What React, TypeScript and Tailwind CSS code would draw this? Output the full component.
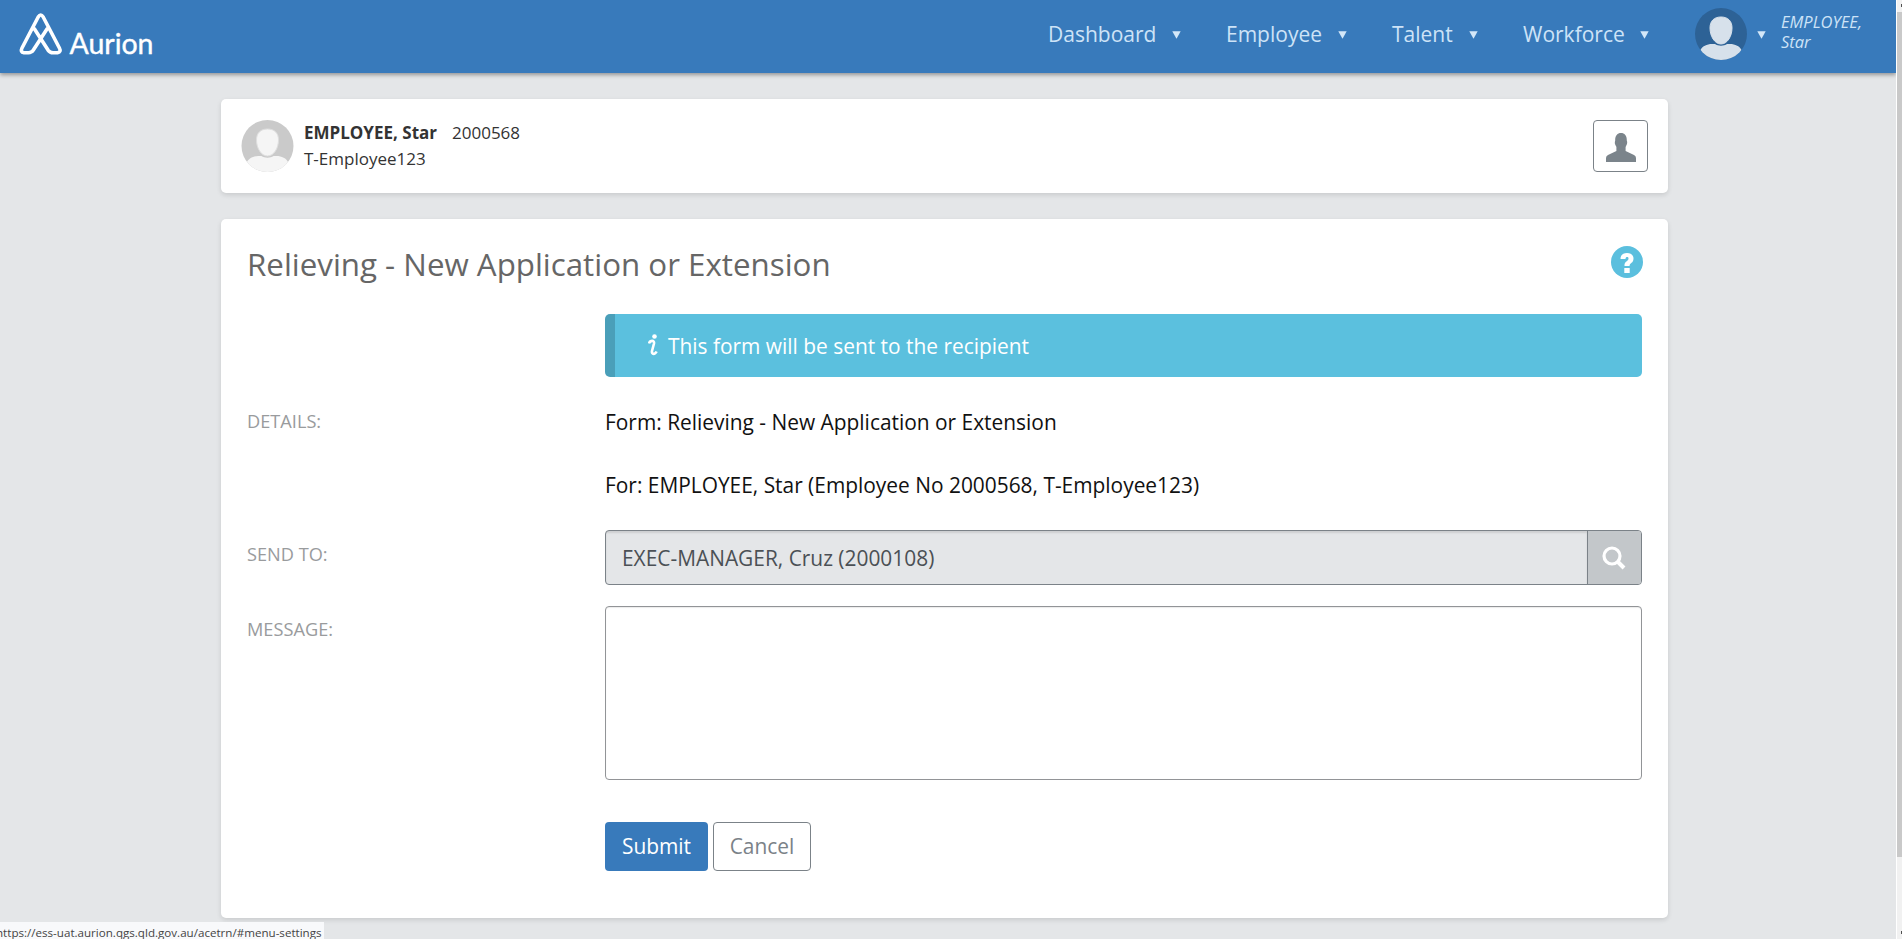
import React from "react";

const menus = [
  { label: "Dashboard", gap: "mr-[45px]", text: "w-[122px]" },
  { label: "Employee", gap: "mr-[45px]", text: "w-[110px]" },
  { label: "Talent", gap: "mr-[45px]", text: "w-[75px]" },
  { label: "Workforce", gap: "mr-[46px]", text: "w-[115px]" },
];

function Caret() {
  return (
    <svg className="h-[8px] w-[9px] shrink-0" viewBox="0 0 9 8">
      <path d="M0.3 0.3H8.7L4.5 7.8Z" fill="#d3e7f8" />
    </svg>
  );
}

function Avatar({ id, back, front, rim, className }: { id: string; back: string; front: string; rim: string; className: string }) {
  return (
    <svg className={className} viewBox="0 0 52 52">
      <clipPath id={id}>
        <circle cx="26" cy="26" r="26" />
      </clipPath>
      <circle cx="26" cy="26" r="26" fill={back} />
      <g clipPath={`url(#${id})`}>
        <path d="M5 43C7 38 12 36 17 36H20C23 38.3 29 38.3 32 36H35C40 36 45 38 47 43V52H5Z" fill={front} />
        <path d="M26 9C33 9 37 13 37 20C37 28 32.5 36 26 36S15 28 15 20C15 13 19 9 26 9Z" fill={front} stroke={rim} strokeWidth="1" />
      </g>
    </svg>
  );
}

function Logo() {
  return (
    <svg className="ml-[18px] h-[56px] w-[150px] shrink-0" viewBox="18 8 150 56">
      <g fill="none" stroke="#fff" strokeWidth="3.6" strokeLinejoin="round" strokeLinecap="round">
        <path d="M34.5 29L48.2 50.3Q50 52.7 53 52.7H57.5Q61.5 52 59.4 48L43.2 17Q40.7 13.1 38.2 17L22 48Q20 52 24 52.7H28.5Q31.5 52.7 33.2 50.3L47 29" />
      </g>
      <text x="69.5" y="54" textLength="84" lengthAdjust="spacingAndGlyphs" fill="#fff" stroke="#fff" strokeWidth="0.4" strokeLinejoin="round" fontFamily="Lato, sans-serif" fontSize="28">Aurion</text>
    </svg>
  );
}

function Header() {
  return (
    <header className="flex h-[73px] items-start bg-[#387abb] shadow-[0_2px_4px_rgba(0,0,0,0.35)]">
      <div className="pt-[8px]"><Logo /></div>
      <nav className="ml-auto flex h-[69px] items-center text-[21px] text-[#cde3f7]">
        {menus.map((m) => (
          <a key={m.label} className={`flex items-center ${m.gap}`}>
            <span className={`pt-px whitespace-nowrap ${m.text}`}>{m.label}</span>
            <span className="ml-[2px] flex"><Caret /></span>
          </a>
        ))}
        <Avatar id="user-clip" className="mb-[2px] size-[52px]" back="#2d6296" front="#d7e1eb" rim="#d7e1eb" />
        <span className="mr-[15px] ml-[10px] flex"><Caret /></span>
        <span className="mb-[5px] w-[115px] text-[16.5px] leading-[20px] italic">EMPLOYEE,<br />Star</span>
      </nav>
    </header>
  );
}

function SummaryCard() {
  return (
    <section className="flex h-[94px] items-start rounded-[5px] bg-white px-[20px] pt-[21px] shadow-[0_2px_5px_rgba(0,0,0,0.12)]">
      <Avatar id="employee-clip" className="h-[52px] w-[53px]" back="#cacaca" front="#f5f5f5" rim="#dedede" />
      <div className="ml-[10px] text-[17px] leading-[26px] text-[#333]">
        <div><b className="font-bold">EMPLOYEE, Star</b><span className="ml-[15px]">2000568</span></div>
        <div>T-Employee123</div>
      </div>
      <button className="ml-auto flex h-[52px] w-[55px] items-center justify-center rounded-[4px] border border-[#7b8288]">
        <svg className="mt-[3px] ml-[1px] h-[29px] w-[30px]" viewBox="0 0 30 29">
          <path d="M9.5 12C8.5 11 8.8 8.5 9.2 7.5C9 2.5 11.5 0 15 0S21 2.5 20.8 7.5C21.3 8.5 21.5 11 20.4 12.2C20.2 13 19.8 13.3 19.6 14V18L28 22Q30 23 30 25V29H0V25Q0 23 2 22L10.4 18V14C10.2 13.3 9.7 13 9.5 12Z" fill="#7b848b" />
        </svg>
      </button>
    </section>
  );
}

function Row({ label, labelPad, className, children }: { label?: string; labelPad?: string; className?: string; children: React.ReactNode }) {
  return (
    <div className={`flex items-start ${className ?? ""}`}>
      <div className={`w-[358px] shrink-0 text-[18.2px] leading-[24px] text-[#999b9d] ${labelPad ?? ""}`}>{label}</div>
      <div className="min-w-0 flex-1">{children}</div>
    </div>
  );
}

function FormCard() {
  return (
    <section className="mt-[26px] h-[699px] rounded-[5px] bg-white px-[26px] shadow-[0_2px_5px_rgba(0,0,0,0.12)]">
      <div className="flex h-[95px] items-start justify-between pt-[26px]">
        <h1 className="text-[31.3px] leading-[38px] text-[#666]">Relieving - New Application or Extension</h1>
        <svg className="mt-[1px] mr-[-1px] h-[32px] w-[32px]" viewBox="0 0 32 32">
          <circle cx="16" cy="16" r="16" fill="#5bbfde" />
          <path d="M9.5 13C9.5 9 12 7 16 7C20 7 22.5 9.3 22.5 12.5C22.5 17.5 18.5 16.5 18.5 20H13.5C13.2 15 17.5 15.5 17.5 12.5C17.5 10.5 14.5 10.5 14.5 13ZM13.3 22H18.7V27H13.3Z" fill="#fff" />
        </svg>
      </div>
      <Row>
        <div className="flex h-[63px] items-center rounded-[5px] border-l-[10px] border-[#4a9fb9] bg-[#5bc0de] pl-[33px] text-[20.9px] text-white">
          <svg className="mt-[-2px] h-[22px] w-[10px]" viewBox="0 0 10 22">
            <circle cx="6.5" cy="2.5" r="2.3" fill="#fff" />
            <path d="M1 9.5C2 6 6.7 6 6 9.5L4 17C3.3 21 7.2 20.5 8.6 17.5" fill="none" stroke="#fff" strokeWidth="2.6" />
          </svg>
          <span className="mt-[2px] ml-[10px]">This form will be sent to the recipient</span>
        </div>
      </Row>
      <Row label="DETAILS:" labelPad="pt-[32px]" className="h-[153px]">
        <div className="pt-[29px] text-[20.9px] leading-[32px] text-[#111]">
          <p>Form: Relieving - New Application or Extension</p>
          <p className="mt-[31px]">For: EMPLOYEE, Star (Employee No 2000568, T-Employee123)</p>
        </div>
      </Row>
      <Row label="SEND TO:" labelPad="pt-[12px]" className="h-[76px]">
        <div className="flex h-[55px] overflow-hidden rounded-[4px] border border-[#7b8288] bg-[#e4e6e8]">
          <div className="flex flex-1 items-center pt-[3px] pl-[16px] text-[20.9px] text-[#4b5055] shadow-[inset_0_2px_2px_rgba(0,0,0,0.1)]">EXEC-MANAGER, Cruz (2000108)</div>
          <button className="flex w-[54px] items-center justify-center border-l border-[#7b8288] bg-[#c3c7ca]">
            <svg className="mr-[1px] size-[24px]" viewBox="0 0 24 24">
              <circle cx="10" cy="10" r="8" fill="none" stroke="#fff" strokeWidth="3.2" />
              <path d="M15.5 15.5L22 22" stroke="#fff" strokeWidth="4" />
            </svg>
          </button>
        </div>
      </Row>
      <Row label="MESSAGE:" labelPad="pt-[11px]">
        <textarea className="block h-[174px] w-full resize-none rounded-[4px] border border-[#929497] shadow-[inset_0_1px_1px_rgba(0,0,0,0.08)]" />
        <div className="mt-[42px] flex gap-[5px] text-[20.9px]">
          <button className="h-[49px] w-[103px] rounded-[4px] bg-[#387abb] text-white">Submit</button>
          <button className="h-[49px] w-[98px] rounded-[4px] border border-[#7b8288] bg-white text-[#7b8288]">Cancel</button>
        </div>
      </Row>
    </section>
  );
}

export default function App() {
  return (
    <div className="flex h-[939px] overflow-hidden bg-[#e4e6e8] font-['Open_Sans',sans-serif]">
      <div className="min-w-0 flex-1">
        <Header />
        <main className="mt-[26px] ml-[221px] w-[1447px]">
          <SummaryCard />
          <FormCard />
        </main>
      </div>
      <div className="flex w-[6px] flex-col items-end border-l border-white bg-[#f1f1f1]">
        <div className="mt-[4px] h-[3px] w-px bg-[#505050]" />
        <div className="mt-[5px] h-[845px] w-full bg-[#c9c9c9]" />
        <div className="mt-[74px] h-[3px] w-px bg-[#505050]" />
      </div>
      <div className="absolute bottom-0 left-0 h-[17px] w-[324px] overflow-hidden bg-[#f8f9fb]">
        <div className="ml-[-4px] text-[11.6px] leading-[22px] whitespace-nowrap text-[#444]">https://ess-uat.aurion.qgs.qld.gov.au/acetrn/#menu-settings</div>
      </div>
    </div>
  );
}
